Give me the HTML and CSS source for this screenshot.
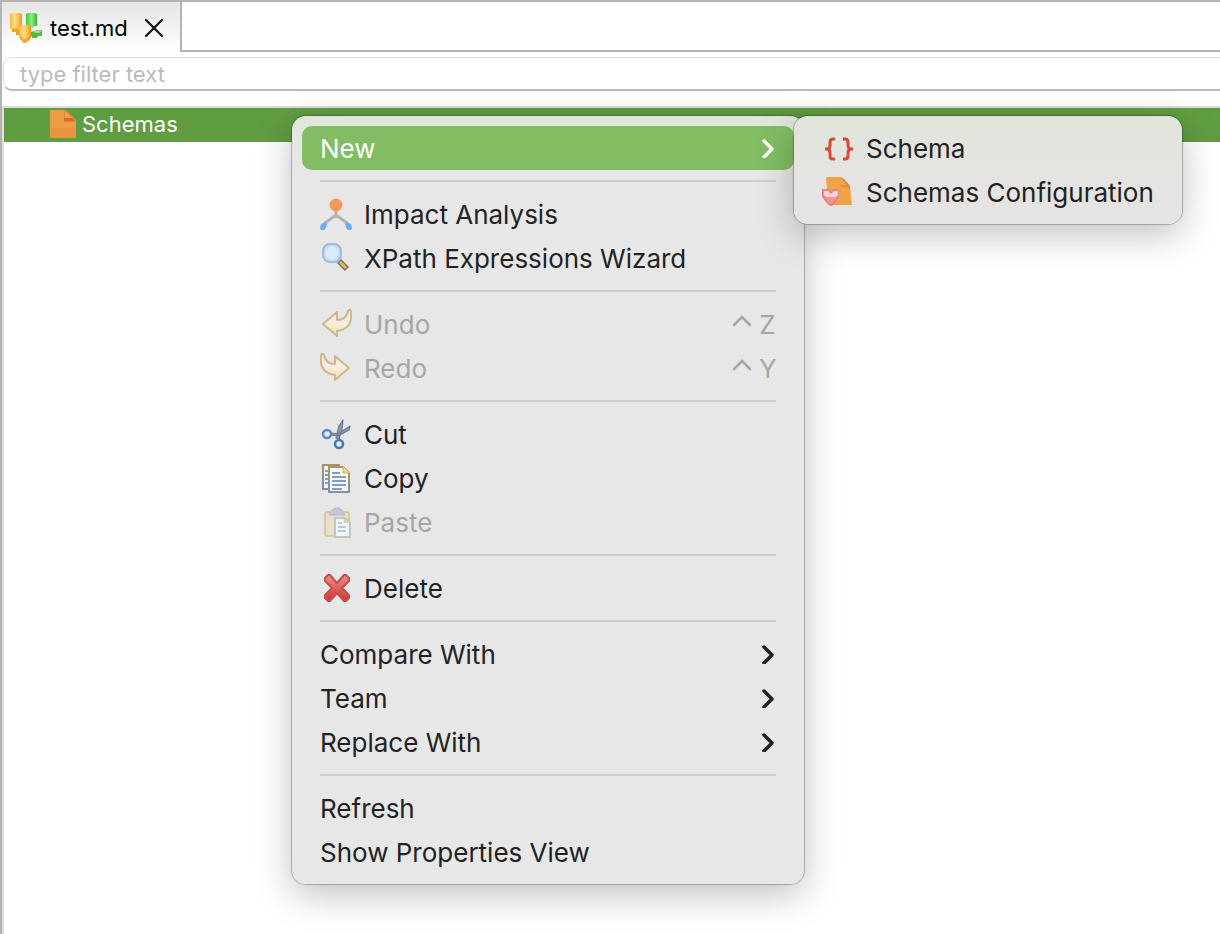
FILE: index.html
```html
<!DOCTYPE html>
<html lang="en">
<head>
    <meta charset="UTF-8">
    <meta name="viewport" content="width=device-width, initial-scale=1.0">
    <title>test.md</title>
    <link rel="stylesheet" href="styles.css">
</head>
<body>

    <div class="editor">
        <header class="tabs">
            <div class="tab">
                <svg class="icon" viewBox="0 0 32 32" aria-hidden="true">
                    <defs>
                        <linearGradient id="gold" x1="0" x2="1" y1="0" y2="0">
                            <stop offset="0" stop-color="#fcb52c"/>
                            <stop offset=".4" stop-color="#ffe08a"/>
                            <stop offset="1" stop-color="#ee9a1c"/>
                        </linearGradient>
                        <linearGradient id="leaf" x1="0" x2="1">
                            <stop offset="0" stop-color="#43c33b"/>
                            <stop offset=".5" stop-color="#8af080"/>
                            <stop offset="1" stop-color="#36b52c"/>
                        </linearGradient>
                    </defs>
                    <path d="M16 2l2-1h7l2 1v12h-3l-3 3-5-3z" fill="url(#leaf)"/>
                    <path d="M20 20l5-1 2-1h5v6h-4l-1 2h-5z" fill="#4dbd3b"/>
                    <path d="M24 19l4-1 4 1-3 2h-4z" fill="#91e77e"/>
                    <path d="M0 2l2-1h8l2 1v14l-2 3H2v-2H0z" fill="url(#gold)"/>
                    <path d="M2 17l5-1 4 3v4H6v-3H2z" fill="#f5a222"/>
                    <path d="M9 15l3-2h6l3 1v12l-2 2-2 1-1 2h-3l-1-2-2-2-1-3z" fill="url(#gold)"/>
                    <path d="M10 24l4 3 6-2v3l-3 2-1 1h-3l-1-2-2-2z" fill="#ee911b" opacity=".6"/>
                </svg>
                <span>test.md</span>
                <button class="close" aria-label="Close">
                    <svg viewBox="0 0 20 20"><path d="M2 2l16 16M18 2L2 18" fill="none" stroke="#111" stroke-width="2.2" stroke-linecap="round"/></svg>
                </button>
            </div>
        </header>

        <div class="filter">
            <input type="text" placeholder="type filter text" aria-label="Filter">
        </div>

        <div class="tree" role="tree">
            <div class="tree-row" role="treeitem" aria-selected="true">
                <svg class="file" viewBox="0 0 26 28" aria-hidden="true">
                    <path d="M0 0h14l4 2 8 9v17H0z" fill="#ec9c42"/>
                    <path d="M0 18h26v10H0z" fill="#e88f3c" opacity=".6"/>
                    <path d="M14 0l4 2 8 8v2H14z" fill="#e08638"/>
                    <path d="M14 8h8l3 3H14z" fill="#d66a2c"/>
                    <path d="M15 1l7 7h-7z" fill="#ef9f4a"/>
                </svg>
                <span>Schemas</span>
            </div>
        </div>
    </div>

    <ul class="menu context" role="menu">
        <li>
            <button class="item active" role="menuitem" aria-haspopup="menu">New
                <svg class="arrow" viewBox="0 0 12 20"><path d="M2 3l8 8-8 8"/></svg>
            </button>
        </li>
        <li class="separator" role="separator"></li>
        <li>
            <button class="item" role="menuitem">
                <svg class="icon" viewBox="0 0 32 32" aria-hidden="true">
                    <path d="M16 13v7M16 17L5 25M16 17l11 8" fill="none" stroke="#b4b4b4" stroke-width="3"/>
                    <circle cx="16" cy="7" r="6.500" fill="#f39855"/>
                    <path d="M1 26l4-2 2 2-1 4-2 2H1l-1-2zM31 26l-4-2-2 2 1 4 2 2h3l1-2z" fill="#6eabf2"/>
                </svg>
                Impact Analysis
            </button>
        </li>
        <li>
            <button class="item" role="menuitem">
                <svg class="icon" viewBox="0 0 32 32" aria-hidden="true">
                    <path d="M19 19l8 8" stroke="#977047" stroke-width="6"/>
                    <path d="M20 20l6 6" stroke="#d9b37d" stroke-width="3"/>
                    <rect x="3" y="2" width="18" height="18" rx="7" fill="#c9dffb" stroke="#9cb9e4" stroke-width="2"/>
                    <rect x="6" y="5" width="12" height="12" rx="5" fill="#dbe9fd"/>
                </svg>
                XPath Expressions Wizard
            </button>
        </li>
        <li class="separator" role="separator"></li>
        <li>
            <button class="item" role="menuitem" disabled>
                <svg class="icon" viewBox="0 0 32 32" aria-hidden="true">
                    <defs>
                        <linearGradient id="cream" x1="0" x2="0" y1="0" y2="1">
                            <stop offset="0" stop-color="#ece2cf"/>
                            <stop offset=".5" stop-color="#f7f0dc"/>
                            <stop offset="1" stop-color="#e9dcae"/>
                        </linearGradient>
                    </defs>
                    <path d="M3 16L17 4v8q9 0 11-9 2-3 3 1 2 17-14 19v5z" fill="url(#cream)" stroke="#cdb792" stroke-width="2" stroke-linejoin="round"/>
                </svg>
                Undo
                <span class="shortcut">
                    <svg viewBox="0 0 18 12"><path d="M1 10l8-8 8 8"/></svg>
                    <kbd>Z</kbd>
                </span>
            </button>
        </li>
        <li>
            <button class="item" role="menuitem" disabled>
                <svg class="icon" viewBox="0 0 32 32" aria-hidden="true">
                    <path d="M29 16L15 4v8Q6 12 4 3 2 0 1 4q-2 17 14 19v5z" fill="url(#cream)" stroke="#cdb792" stroke-width="2" stroke-linejoin="round"/>
                </svg>
                Redo
                <span class="shortcut">
                    <svg viewBox="0 0 18 12"><path d="M1 10l8-8 8 8"/></svg>
                    <kbd>Y</kbd>
                </span>
            </button>
        </li>
        <li class="separator" role="separator"></li>
        <li>
            <button class="item" role="menuitem">
                <svg class="icon" viewBox="0 0 32 32" aria-hidden="true">
                    <path d="M23 2l-1 9-3 10-3-1 3-12zM30 8l-1 4-11 6-7-1 1-2 6 1z" fill="#929bb2" stroke="#6c7790" stroke-width="1.200" stroke-linejoin="round"/>
                    <circle cx="7" cy="16" r="4" fill="#e3edf8" stroke="#5d88c0" stroke-width="2.500"/>
                    <circle cx="19" cy="26" r="4" fill="#e3edf8" stroke="#4479bb" stroke-width="2.500"/>
                </svg>
                Cut
            </button>
        </li>
        <li>
            <button class="item" role="menuitem">
                <svg class="icon" viewBox="0 0 32 32" aria-hidden="true">
                    <path d="M3 3h16v24H3z" fill="#eef6fd" stroke="#a3936b" stroke-width="2"/>
                    <path d="M3 14v13h5" fill="none" stroke="#7e90aa" stroke-width="2"/>
                    <path d="M5 9h3M5 13h3M5 17h3M5 21h3" stroke="#7fa3c6" stroke-width="2"/>
                    <path d="M9 5h14l6 6v19H9z" fill="#f3f9fd" stroke="#a99660" stroke-width="2"/>
                    <path d="M9 18v12h20V20" fill="none" stroke="#8592a3" stroke-width="2"/>
                    <path d="M23 4v7h7z" fill="#f3d68c" stroke="#cfad62"/>
                    <path d="M12 11h8M12 15h14M12 19h14M12 23h14M12 27h10" stroke="#7f9dcb" stroke-width="2"/>
                </svg>
                Copy
            </button>
        </li>
        <li>
            <button class="item" role="menuitem" disabled>
                <svg class="icon" viewBox="0 0 32 32" aria-hidden="true">
                    <rect x="5" y="6" width="24" height="24" rx="2" fill="#e9dfcf" stroke="#dcc6a6" stroke-width="2"/>
                    <path d="M9 9l3-5h2V2h6v2h2l3 5z" fill="#c0c7d8" stroke="#b2bacd"/>
                    <path d="M15 12h10l5 5v14H15z" fill="#f1f4f5" stroke="#c2c5c0" stroke-width="2"/>
                    <path d="M24 11v6h6z" fill="#d9cea5"/>
                    <path d="M18 17h4M18 21h8M18 25h8" stroke="#bccae0" stroke-width="2"/>
                </svg>
                Paste
            </button>
        </li>
        <li class="separator" role="separator"></li>
        <li>
            <button class="item" role="menuitem">
                <svg class="icon" viewBox="0 0 32 32" aria-hidden="true">
                    <defs>
                        <linearGradient id="red" x1="0" x2="0" y1="0" y2="1">
                            <stop offset="0" stop-color="#ea9085"/>
                            <stop offset="1" stop-color="#d23337"/>
                        </linearGradient>
                    </defs>
                    <path d="M5 6l3-3h2l7 8 7-8h2l3 3v3l-7 7 7 7v3l-3 3h-2l-7-8-7 8H8l-3-3v-3l7-7-7-7z" fill="url(#red)" stroke="#c5504a" stroke-width="2" stroke-linejoin="round"/>
                </svg>
                Delete
            </button>
        </li>
        <li class="separator" role="separator"></li>
        <li>
            <button class="item" role="menuitem" aria-haspopup="menu">Compare With
                <svg class="arrow" viewBox="0 0 12 20"><path d="M2 3l8 8-8 8"/></svg>
            </button>
        </li>
        <li>
            <button class="item" role="menuitem" aria-haspopup="menu">Team
                <svg class="arrow" viewBox="0 0 12 20"><path d="M2 3l8 8-8 8"/></svg>
            </button>
        </li>
        <li>
            <button class="item" role="menuitem" aria-haspopup="menu">Replace With
                <svg class="arrow" viewBox="0 0 12 20"><path d="M2 3l8 8-8 8"/></svg>
            </button>
        </li>
        <li class="separator" role="separator"></li>
        <li><button class="item" role="menuitem">Refresh</button></li>
        <li><button class="item" role="menuitem">Show Properties View</button></li>
    </ul>

    <ul class="menu submenu" role="menu">
        <li>
            <button class="item" role="menuitem">
                <svg class="icon" viewBox="0 0 32 32" aria-hidden="true">
                    <path d="M14 7h-2q-3 0-3 3v3q0 4-3 4H4h2q3 0 3 4v3q0 3 3 3h2M22 7h2q3 0 3 3v3q0 4 3 4h2-2q-3 0-3 4v3q0 3-3 3h-2" transform="translate(-1)" fill="none" stroke="#dc4838" stroke-width="3"/>
                </svg>
                Schema
            </button>
        </li>
        <li>
            <button class="item" role="menuitem">
                <svg class="icon" viewBox="0 0 32 32" aria-hidden="true">
                    <path d="M4 1h14l4 2 6 7 2 19H6z" fill="#efa246"/>
                    <path d="M18 1l4 2 6 7v2l-10-2z" fill="#e18a3a"/>
                    <path d="M18 2l7 7h-7z" fill="#f1a650"/>
                    <path d="M0 13h7l2 2 2-2h6v8l-3 5-4 4H8l-4-4-4-5z" fill="#e58480"/>
                    <path d="M2 15h4l3 3 3-3h4v4l-2 2H4l-2-2z" fill="#fbd3d6"/>
                    <path d="M3 21h12l-3 4-3 3-4-3z" fill="#ee989a"/>
                </svg>
                Schemas Configuration
            </button>
        </li>
    </ul>

</body>
</html>
```

FILE: styles.css
```css
* {
    box-sizing: border-box;
}

body {
    margin: 0;
    font-family: Inter, "Liberation Sans", sans-serif;
    font-size: 26px;
    color: #222;
    background: #fff;
    overflow: hidden;
}

button {
    font: inherit;
    color: inherit;
    background: none;
    border: none;
    padding: 0;
}

.editor {
    min-height: 100vh;
    display: flex;
    flex-direction: column;
    border-left: 2px solid #b3b3b3;
    border-top: 2px solid #b3b3b3;
}

/* tab strip */
.tabs {
    display: flex;
    height: 50px;
    background: linear-gradient(#b3b3b3, #b3b3b3) bottom / 100% 2px no-repeat;
}

.tab {
    display: flex;
    align-items: center;
    gap: 8px;
    padding: 2px 16px 0 8px;
    font-size: 22px;
    color: #000;
    background: linear-gradient(#e5e5e5, #fff);
    border-right: 2px solid #b3b3b3;
}

.icon {
    width: 32px;
    height: 32px;
    flex: none;
}

.close {
    display: flex;
    margin-left: 8px;
}

.close svg {
    width: 20px;
    height: 20px;
}

/* filter box */
.filter {
    padding: 5px 0 15px 1px;
}

.filter input {
    display: block;
    width: 100%;
    height: 34px;
    padding: 0 16px;
    font: inherit;
    font-size: 22px;
    border: 1px solid #ddd;
    border-right: none;
    border-bottom: 2px solid #bbb;
    border-radius: 9px 0 0 9px;
    outline: none;
}

.filter input::placeholder {
    color: #bbb;
}

.tree {
    flex: 1;
    border-top: 2px solid #ddd;
    border-left: 2px solid #e0e0e0;
}

.tree-row {
    display: flex;
    align-items: center;
    gap: 6px;
    height: 34px;
    padding: 0 0 2px 46px;
    font-size: 22px;
    color: #fff;
    background: #609d42;
}

.file {
    width: 26px;
    height: 28px;
}

/* popup menus */
.menu {
    position: absolute;
    margin: 0;
    padding: 10px;
    list-style: none;
    border-radius: 14px;
    background: linear-gradient(#e1e6da, #e7e7e7 60px);
    box-shadow: 0 0 1px 1px rgba(0, 0, 0, 0.25), 0 10px 36px rgba(0, 0, 0, 0.25);
}

.context {
    top: 116px;
    left: 292px;
    min-width: 512px;
}

.submenu {
    top: 116px;
    left: 794px;
    min-width: 388px;
    background: linear-gradient(#e0e5d9, #e5e4e2 60px);
}

.item {
    display: flex;
    align-items: center;
    gap: 12px;
    width: 100%;
    height: 44px;
    padding: 0 18px;
    text-align: left;
    white-space: nowrap;
    border-radius: 10px;
}

.item:disabled {
    color: #a6a6a6;
}

.item.active {
    color: #fff;
    background: #82bd64;
}

.arrow {
    width: 12px;
    height: 20px;
    margin-left: auto;
    margin-right: 2px;
    fill: none;
    stroke: currentColor;
    stroke-width: 3.5;
    stroke-linecap: round;
    stroke-linejoin: round;
}

.shortcut {
    display: flex;
    align-items: center;
    gap: 8px;
    margin-left: auto;
}

.shortcut svg {
    width: 18px;
    height: 12px;
    margin-bottom: 6px;
    fill: none;
    stroke: currentColor;
    stroke-width: 2.5;
    stroke-linecap: round;
}

.shortcut kbd {
    width: 17px;
    font: inherit;
    text-align: center;
}

.separator {
    height: 2px;
    margin: 10px 18px;
    background: #cecece;
}
```
